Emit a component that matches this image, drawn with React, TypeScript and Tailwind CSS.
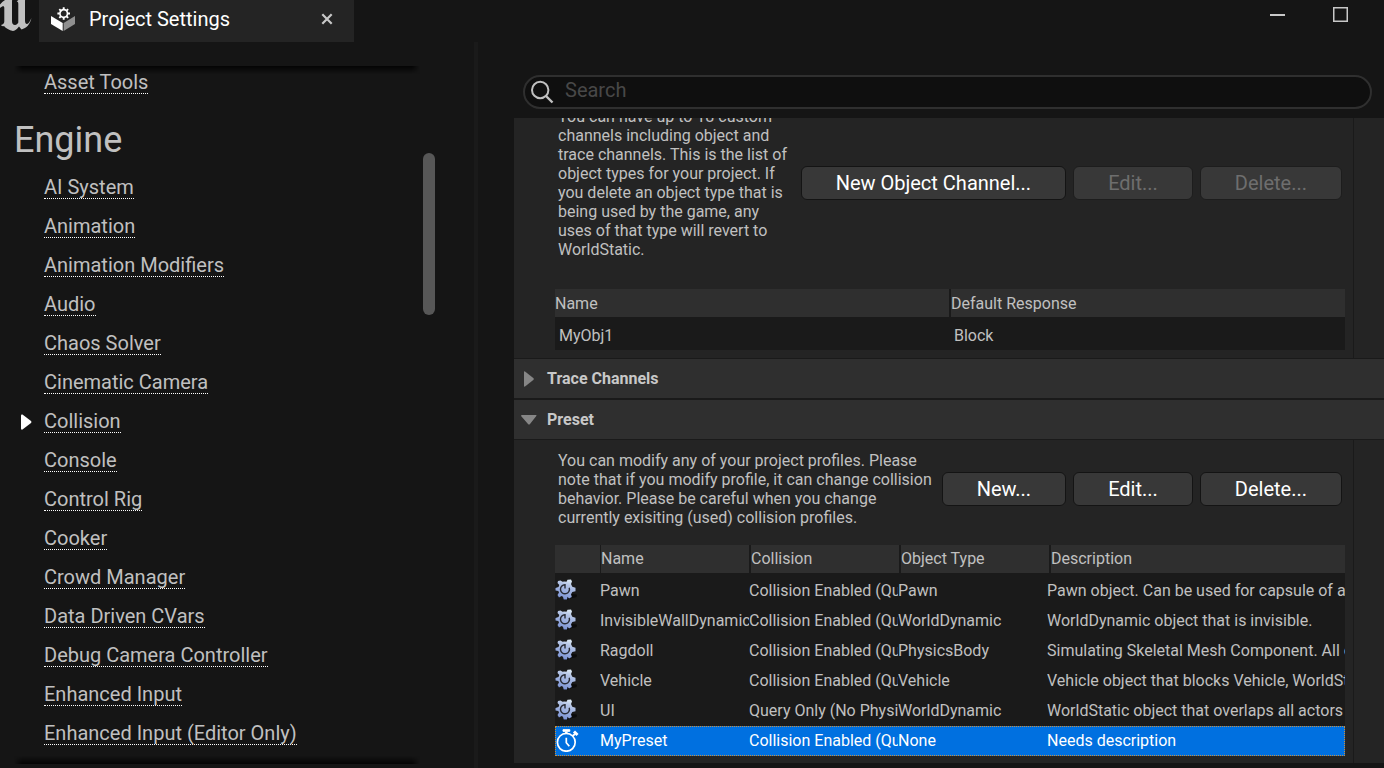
import React from "react";

const engineSections = [
  "AI System",
  "Animation",
  "Animation Modifiers",
  "Audio",
  "Chaos Solver",
  "Cinematic Camera",
  "Collision",
  "Console",
  "Control Rig",
  "Cooker",
  "Crowd Manager",
  "Data Driven CVars",
  "Debug Camera Controller",
  "Enhanced Input",
  "Enhanced Input (Editor Only)",
];

const presets = [
  { name: "Pawn", collision: "Collision Enabled (Query and Physics)", type: "Pawn", description: "Pawn object. Can be used for capsule of any playerable character or AI." },
  { name: "InvisibleWallDynamic", collision: "Collision Enabled (Query and Physics)", type: "WorldDynamic", description: "WorldDynamic object that is invisible." },
  { name: "Ragdoll", collision: "Collision Enabled (Query and Physics)", type: "PhysicsBody", description: "Simulating Skeletal Mesh Component. All other channels will be set to default." },
  { name: "Vehicle", collision: "Collision Enabled (Query and Physics)", type: "Vehicle", description: "Vehicle object that blocks Vehicle, WorldStatic, and WorldDynamic." },
  { name: "UI", collision: "Query Only (No Physics Collision)", type: "WorldDynamic", description: "WorldStatic object that overlaps all actors by default." },
  { name: "MyPreset", collision: "Collision Enabled (Query and Physics)", type: "None", description: "Needs description", selected: true },
];

function UnrealLogo() {
  return (
    <svg className="h-[32px] w-[32px] shrink-0" viewBox="0 0 32 32" fill="#c0c0c0" aria-hidden="true">
      <path d="M0 4.500 C3 1 7 -2 12.500 -3 L12 1 V21 C12 23.500 13 25 15 25 C16.500 25 17.500 24 18.300 22.500 V4 C18.300 2.500 18 1.500 16.700 1.500 C19 -1 22 -2 27 -4 C25 -2 25 0 25 2 V20 C25 22.500 25.500 24 27 24 C28.500 24 30 21 31.500 18 C30 24.500 26.500 28 21.500 29.500 L19 26.500 C17 29 15.500 30.500 13 31 C9 30 6 28.500 4 26 C2.500 26.500 1.500 26 1 25 C3 24.500 4.300 23.500 4.300 21.500 V8 C4.300 6 3 5.500 0 8 Z" />
    </svg>
  );
}

function SettingsIcon() {
  return (
    <svg className="size-[26px] shrink-0" viewBox="0 0 26 26" aria-hidden="true">
      <path d="M1 10 L12.700 17 V25 L1 18 Z" fill="#fff" />
      <path d="M25 10 L13.600 17 V25 L25 18 Z" fill="#8f8f8f" />
      <circle cx="13.700" cy="7.800" r="7" fill="#242424" />
      <g stroke="#fff" fill="none">
        <circle cx="13.700" cy="7.500" r="3.800" strokeWidth="1.700" />
        <path
          strokeWidth="1.900"
          d="M13.700 1.200V3.400M13.700 11.600V13.800M7.400 7.500H9.600M17.800 7.500H20M9.300 3.100L10.800 4.600M16.600 10.400L18.100 11.900M9.300 11.900L10.800 10.400M16.600 4.600L18.100 3.100"
        />
      </g>
    </svg>
  );
}

function GearIcon() {
  return (
    <svg className="block h-[24px] w-[24px]" viewBox="0 0 24 24" aria-hidden="true">
      <defs>
        <linearGradient id="gear-fill" x1="0.750" y1="0" x2="0.400" y2="1">
          <stop offset="0" stopColor="#e2eef6" />
          <stop offset="0.300" stopColor="#b4c4e6" />
          <stop offset="1" stopColor="#7a92d4" />
        </linearGradient>
      </defs>
      <path d="M8 21.500L17 16L21.500 16.500Q23 18.500 20 19.500L15 20.500L12 22Z" fill="#070707" opacity="0.800" />
      <path
        d="M3 3L5.500 2.500L7.500 3.800L9.500 3.500L11.500 3.800L12.500 1.800L16 1.500L17 3.500L16 6L17.300 8.800L20.500 9.800V13.200L17.300 14L16 16.300L16.800 19L14 20.500L12.500 18.800L12 21.500H8.700L8 18.800L6.500 18L4 19.500L2.500 17L4 14.500L3.300 13L0.500 12.500V10L3.500 9L4.300 7L2.500 5Z"
        fill="url(#gear-fill)"
      />
      <path d="M10 10.500V6.800A4.500 4.500 0 1 0 14.200 9.800" fill="none" stroke="#262932" strokeWidth="1.400" />
    </svg>
  );
}

function StopwatchIcon() {
  return (
    <svg className="block h-[24px] w-[24px]" viewBox="0 0 24 24" fill="none" stroke="#fff" aria-hidden="true">
      <circle cx="11.300" cy="14.300" r="8.900" strokeWidth="1.700" />
      <path d="M8 1.700H14.800V3.300H8Z" fill="#fff" strokeWidth="1" />
      <path d="M11.300 3.500V5.500" strokeWidth="2.500" />
      <path d="M19 3.500L22.500 7" strokeWidth="3" />
      <path d="M17.500 8L20 6" strokeWidth="2" />
      <path d="M11.300 9.800V14.800L14.300 18.300" strokeWidth="1.700" />
    </svg>
  );
}

function ActionButton({ children, disabled }: { children: React.ReactNode; disabled?: boolean }) {
  return (
    <button
      type="button"
      disabled={disabled}
      className="h-[34px] shrink-0 rounded-md border border-[#141414] bg-[#383838] px-[34px] text-[20px] leading-[30px] whitespace-nowrap text-white disabled:border-[#1d1d1d] disabled:text-[#6e6e6e]"
    >
      {children}
    </button>
  );
}

function SidebarLink({ label, current }: { label: string; current?: boolean }) {
  return (
    <li className="flex h-[39px] items-center">
      <span className="flex w-[30px] shrink-0 justify-start pl-[7px]">
        {current && (
          <svg className="h-[16px] w-[11px]" viewBox="0 0 11 16" fill="#fff" aria-hidden="true">
            <path d="M0 1.500Q0 0 1.500 0.500L10 7Q11 8 10 9L1.500 15.500Q0 16 0 14.500Z" />
          </svg>
        )}
      </span>
      <a
        href="#"
        aria-current={current ? "page" : undefined}
        className="border-b border-dotted border-white text-[20px] leading-[22px] whitespace-nowrap text-[#c0c0c0]"
      >
        {label}
      </a>
    </li>
  );
}

function SectionHeader({ title, open }: { title: string; open?: boolean }) {
  return (
    <h2>
      <button
        type="button"
        aria-expanded={!!open}
        className="flex h-[39px] w-full items-center bg-[#2f2f2f] text-[16px] leading-[19px] font-bold text-[#c8c8c8]"
      >
        <span className="flex w-[33px] items-center pl-[7px]">
          <svg className="size-[16px]" viewBox="0 0 16 16" fill="#868686" aria-hidden="true">
            {open ? <path d="M0 4Q0 3 1 3H15Q16 3 15.300 4L9 12Q8 13 7 12L0.500 4.500Z" /> : <path d="M3 1Q3 0 4 0.500L12.300 7Q13.500 8 12.300 9L4 15.500Q3 16 3 15Z" />}
          </svg>
        </span>
        {title}
      </button>
    </h2>
  );
}

const headCell = "h-[31px] border-b-[3px] border-[#1a1a1a] bg-[#2f2f2f] p-0 text-left font-normal";
const bodyCell = "h-[30px] overflow-hidden p-0 pb-[2px] whitespace-nowrap";

export default function App() {
  return (
    <div className="flex h-screen flex-col overflow-hidden bg-[#151515] font-[Roboto,sans-serif] text-[#c0c0c0]">
      <header className="flex h-[42px] shrink-0 items-start">
        <div className="w-[39px] shrink-0">
          <UnrealLogo />
        </div>
        <div className="flex h-[42px] w-[315px] shrink-0 items-center bg-[#242424] pr-[20px] pb-[4px] pl-[11px]">
          <SettingsIcon />
          <span className="flex-1 pl-[13px] text-[20px] leading-[24px] text-white">Project Settings</span>
          <button type="button" aria-label="Close tab" className="p-px">
            <svg className="size-[12px]" viewBox="0 0 12 12" stroke="#c8c8c8" strokeWidth="2.200" aria-hidden="true">
              <path d="M1.300 1.300L10.700 10.700M10.700 1.300L1.300 10.700" />
            </svg>
          </button>
        </div>
        <div className="flex flex-1 justify-end gap-[48px] pt-[7px] pr-[36px]">
          <button type="button" aria-label="Minimize">
            <svg className="size-[15px]" viewBox="0 0 15 15" aria-hidden="true">
              <path d="M0 8H15" stroke="#c8c8c8" strokeWidth="2" />
            </svg>
          </button>
          <button type="button" aria-label="Maximize">
            <svg className="size-[15px]" viewBox="0 0 15 15" aria-hidden="true">
              <rect x="0.750" y="0.750" width="13.500" height="13.500" fill="none" stroke="#c8c8c8" strokeWidth="1.500" />
            </svg>
          </button>
        </div>
      </header>

      <div className="flex min-h-0 flex-1">
        <div className="flex w-[474px] shrink-0 pt-[24px] pb-[4px] pl-[14px]">
          <nav aria-label="Settings categories" className="relative w-[406px] overflow-hidden">
            <ul className="-mt-[3px]">
              <SidebarLink label="Asset Tools" />
            </ul>
            <h1 className="h-[66px] pt-[16px] text-[36px] leading-[44px]">Engine</h1>
            <ul>
              {engineSections.map((label) => (
                <SidebarLink key={label} label={label} current={label === "Collision"} />
              ))}
            </ul>
            <div className="absolute inset-x-0 top-0 h-[8px] bg-linear-to-b from-black/80 to-transparent [mask-image:linear-gradient(to_right,transparent,black_8px,black_calc(100%-8px),transparent)]" />
            <div className="absolute inset-x-0 bottom-0 h-[8px] bg-linear-to-t from-black/80 to-transparent [mask-image:linear-gradient(to_right,transparent,black_8px,black_calc(100%-8px),transparent)]" />
          </nav>
          <div className="pt-[87px] pl-[3px]">
            <div className="h-[162px] w-[12px] rounded-full bg-[#575757]" />
          </div>
        </div>
        <div className="w-[4px] shrink-0 bg-[#1a1a1a]" />

        <main className="flex min-w-0 flex-1 flex-col pt-[33px] pb-[5px] pl-[36px]">
          <label className="mr-[12px] ml-[9px] flex h-[34px] shrink-0 items-center rounded-full border-2 border-[#2f2f2f] bg-[#0f0f0f] pl-[6px]">
            <svg className="size-[24px] shrink-0" viewBox="0 0 24 24" fill="none" stroke="#c0c0c0" strokeWidth="2" aria-hidden="true">
              <circle cx="9.200" cy="10" r="8.200" />
              <path d="M15 16L21.500 22.500" strokeWidth="2.400" />
            </svg>
            <input
              type="text"
              aria-label="Search settings"
              placeholder="Search"
              className="min-w-0 flex-1 bg-transparent pb-[5px] pl-[10px] text-[20px] leading-[24px] text-white outline-none placeholder:text-[#484848]"
            />
          </label>

          <div className="mt-[9px] min-h-0 flex-1 overflow-hidden bg-[#242424]">
            <section className="-mt-[11px] mr-[30px] border-r border-[#1a1a1a] pr-[8px] pb-[8px] pl-[41px]">
              <div className="mb-[30px] flex items-center gap-[7px] pr-[3px] pl-[3px]">
                <p className="min-w-0 flex-1 text-[16px] leading-[19px]">
                  You can have up to 18 custom channels including object and trace channels. This is the list of object types for your project. If you delete an object type that is being used by the game, any uses of that type will revert to WorldStatic.
                </p>
                <ActionButton>New Object Channel...</ActionButton>
                <ActionButton disabled>Edit...</ActionButton>
                <ActionButton disabled>Delete...</ActionButton>
              </div>
              <table className="w-full table-fixed border-separate border-spacing-0 bg-[#1a1a1a] text-[16px] leading-[19px]">
                <thead>
                  <tr>
                    <th className={headCell}>
                      <div className="pt-px leading-[27px]">Name</div>
                    </th>
                    <th className={headCell}>
                      <div className="-ml-px border-l-2 border-[#1a1a1a] pt-px leading-[27px]">Default Response</div>
                    </th>
                  </tr>
                </thead>
                <tbody>
                  <tr>
                    <td className="h-[30px] p-0 pl-[4px]">MyObj1</td>
                    <td className="h-[30px] p-0 pl-[4px]">Block</td>
                  </tr>
                </tbody>
              </table>
            </section>

            <div className="border-y border-[#1a1a1a]">
              <SectionHeader title="Trace Channels" />
              <div className="h-[2px] bg-[#1a1a1a]" />
              <SectionHeader title="Preset" open />
            </div>

            <section className="mr-[30px] border-r border-[#1a1a1a] pt-[11px] pr-[8px] pb-[7px] pl-[41px]">
              <div className="mb-[18px] flex items-center gap-[7px] pr-[3px] pl-[3px]">
                <p className="min-w-0 flex-1 text-[16px] leading-[19px]">
                  You can modify any of your project profiles. Please note that if you modify profile, it can change collision behavior. Please be careful when you change currently exisiting (used) collision profiles.
                </p>
                <ActionButton>New...</ActionButton>
                <ActionButton>Edit...</ActionButton>
                <ActionButton>Delete...</ActionButton>
              </div>
              <table className="w-full table-fixed border-separate border-spacing-0 bg-[#1a1a1a] text-[16px] leading-[19px]">
                <colgroup>
                  <col className="w-[45px]" />
                  <col className="w-[149px]" />
                  <col className="w-[149px]" />
                  <col className="w-[149px]" />
                  <col />
                </colgroup>
                <thead>
                  <tr>
                    <th className={headCell} aria-label="Kind" />
                    <th className={headCell}>
                      <div className="border-l border-[#1a1a1a] leading-[28px]">Name</div>
                    </th>
                    <th className={headCell}>
                      <div className="border-l-2 border-[#1a1a1a] leading-[28px]">Collision</div>
                    </th>
                    <th className={headCell}>
                      <div className="ml-px border-l-2 border-[#1a1a1a] leading-[28px]">Object Type</div>
                    </th>
                    <th className={headCell}>
                      <div className="ml-[2px] border-l-2 border-[#1a1a1a] leading-[28px]">Description</div>
                    </th>
                  </tr>
                </thead>
                <tbody>
                  {presets.map((preset) => (
                    <tr
                      key={preset.name}
                      aria-selected={!!preset.selected}
                      className={preset.selected ? "bg-[#0070e0] text-white outline-1 -outline-offset-1 outline-[#c89040] outline-dotted" : ""}
                    >
                      <td className={bodyCell}>{preset.selected ? <StopwatchIcon /> : <GearIcon />}</td>
                      <td className={bodyCell}>{preset.name}</td>
                      <td className={bodyCell}>{preset.collision}</td>
                      <td className={bodyCell}>{preset.type}</td>
                      <td className={bodyCell}>{preset.description}</td>
                    </tr>
                  ))}
                </tbody>
              </table>
            </section>
          </div>
        </main>
      </div>
    </div>
  );
}
